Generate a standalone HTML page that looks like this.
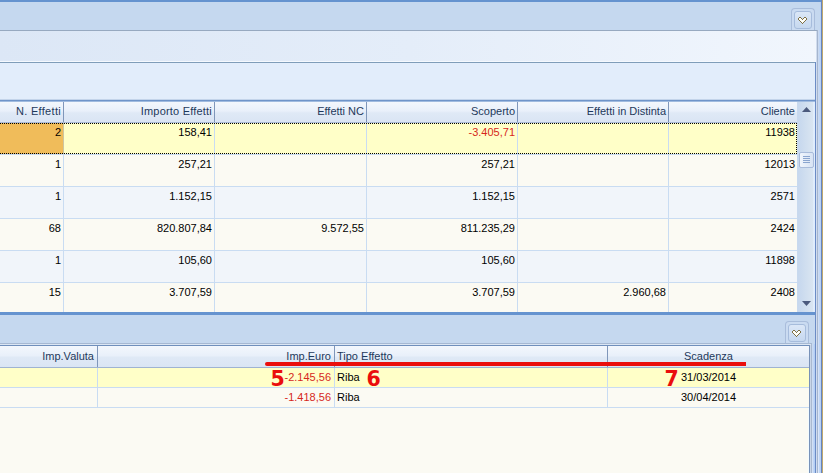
<!DOCTYPE html>
<html><head><meta charset="utf-8">
<style>
html,body{margin:0;padding:0;}
body{width:823px;height:473px;overflow:hidden;position:relative;background:#c5d8ef;font-family:"Liberation Sans",sans-serif;font-size:11px;color:#000;}
.abs{position:absolute;}
.hd{position:absolute;top:102px;height:20px;line-height:18px;text-align:right;color:#1e395b;box-sizing:border-box;border-right:1px solid #7f96ba;padding-right:2px;white-space:nowrap;}
.row{position:absolute;left:0;width:797px;height:31px;border-bottom:1px solid #c9dcf2;}
.c{position:absolute;top:0;height:31px;box-sizing:border-box;border-right:1px solid #c9dcf2;text-align:right;padding-right:2px;line-height:19px;white-space:nowrap;}
.red{color:#d6281c;}
.hd2{position:absolute;top:346px;height:21px;line-height:20px;color:#1e395b;box-sizing:border-box;border-right:1px solid #7f96ba;white-space:nowrap;}
.r2{position:absolute;left:0;width:809px;height:19px;border-bottom:1px solid #c9dcf2;}
.c2{position:absolute;top:0;height:19px;box-sizing:border-box;border-right:1px solid #c9dcf2;line-height:19px;white-space:nowrap;}
.num{position:absolute;color:#ea0e0d;font-weight:bold;font-size:20.5px;line-height:20px;font-family:"DejaVu Sans","Liberation Sans",sans-serif;}
.v{position:absolute;width:1px;}
</style></head><body>
<!-- top bands -->
<div class="abs" style="left:0;top:0;width:821px;height:2px;background:#6593cf;"></div>
<div class="abs" style="left:0;top:30px;width:817px;height:1px;background:#97a9c0;"></div>
<div class="abs" style="left:0;top:31px;width:817px;height:30px;background:linear-gradient(90deg,#dce7f6,#e4edf9 50%,#f1f6fd);"></div>
<div class="abs" style="left:0;top:61px;width:817px;height:1px;background:#f5f9fe;"></div>
<div class="abs" style="left:0;top:62px;width:816px;height:1px;background:#7f9db9;"></div>
<div class="abs" style="left:0;top:63px;width:815px;height:36px;background:#e2edfb;"></div>
<div class="abs" style="left:0;top:99px;width:815px;height:1px;background:#c3d4ea;"></div>
<div class="abs" style="left:0;top:100px;width:815px;height:1px;background:#6f94c9;"></div>
<div class="abs" style="left:0;top:101px;width:815px;height:1px;background:#a0bbdf;"></div>
<!-- top button -->
<div class="abs" style="left:791px;top:8px;width:24px;height:22px;box-sizing:border-box;border:1px solid #a9bddb;border-bottom:none;border-radius:4px 4px 0 0;background:#cadbf1;"></div>
<div class="abs" style="left:794px;top:11px;width:18px;height:18px;box-sizing:border-box;border:1px solid #a6bcdc;border-radius:3px;background:linear-gradient(#dbe7f7,#c6d8ef);"></div>
<svg class="abs" style="left:798px;top:17px" width="9" height="7" shape-rendering="crispEdges"><rect x="1" y="0" width="2" height="1" fill="#7f7044"/><rect x="6" y="0" width="2" height="1" fill="#7f7044"/><rect x="0" y="1" width="1" height="1" fill="#7f7044"/><rect x="1" y="1" width="2" height="1" fill="#fffffa"/><rect x="3" y="1" width="1" height="1" fill="#7f7044"/><rect x="5" y="1" width="1" height="1" fill="#7f7044"/><rect x="6" y="1" width="2" height="1" fill="#fffffa"/><rect x="8" y="1" width="1" height="1" fill="#7f7044"/><rect x="0" y="2" width="1" height="1" fill="#7f7044"/><rect x="1" y="2" width="3" height="1" fill="#fffffa"/><rect x="4" y="2" width="1" height="1" fill="#7f7044"/><rect x="5" y="2" width="3" height="1" fill="#fffffa"/><rect x="8" y="2" width="1" height="1" fill="#7f7044"/><rect x="1" y="3" width="1" height="1" fill="#7f7044"/><rect x="2" y="3" width="5" height="1" fill="#fffffa"/><rect x="7" y="3" width="1" height="1" fill="#7f7044"/><rect x="2" y="4" width="1" height="1" fill="#7f7044"/><rect x="3" y="4" width="3" height="1" fill="#fffffa"/><rect x="6" y="4" width="1" height="1" fill="#7f7044"/><rect x="3" y="5" width="1" height="1" fill="#7f7044"/><rect x="4" y="5" width="1" height="1" fill="#fffffa"/><rect x="5" y="5" width="1" height="1" fill="#7f7044"/><rect x="4" y="6" width="1" height="1" fill="#7f7044"/></svg>
<!-- upper grid -->
<div class="abs" style="left:0;top:102px;width:797px;height:20px;background:linear-gradient(#f3f7fd,#e9f0fa 45%,#dfe9f6 55%,#dae5f4);"></div>
<div class="abs" style="left:0;top:122px;width:797px;height:1px;background:#a8b9d6;"></div>
<div class="hd" style="left:0px;width:64px; letter-spacing:0.3px;">N. Effetti</div>
<div class="hd" style="left:64px;width:151px; letter-spacing:0.2px;">Importo Effetti</div>
<div class="hd" style="left:215px;width:152px;">Effetti NC</div>
<div class="hd" style="left:367px;width:151px;">Scoperto</div>
<div class="hd" style="left:518px;width:151px;">Effetti in Distinta</div>
<div class="hd" style="left:669px;width:129px;border-right-color:#b8c6dc;">Cliente</div>
<div class="row" style="top:123px;background:#ffffc8;"><div class="c" style="left:0px;width:64px;background:#f0bc5a;border-right-color:#cdc5a2;">2</div><div class="c" style="left:64px;width:151px;">158,41</div><div class="c" style="left:215px;width:152px;"></div><div class="c red" style="left:367px;width:151px;">-3.405,71</div><div class="c" style="left:518px;width:151px;"></div><div class="c" style="left:669px;width:128px;border-right:none;padding-right:2px;">11938</div></div>
<div class="row" style="top:155px;background:#fbfaf3;"><div class="c" style="left:0px;width:64px;">1</div><div class="c" style="left:64px;width:151px;">257,21</div><div class="c" style="left:215px;width:152px;"></div><div class="c" style="left:367px;width:151px;">257,21</div><div class="c" style="left:518px;width:151px;"></div><div class="c" style="left:669px;width:128px;border-right:none;padding-right:2px;">12013</div></div>
<div class="row" style="top:187px;background:#f1f5fa;"><div class="c" style="left:0px;width:64px;">1</div><div class="c" style="left:64px;width:151px;">1.152,15</div><div class="c" style="left:215px;width:152px;"></div><div class="c" style="left:367px;width:151px;">1.152,15</div><div class="c" style="left:518px;width:151px;"></div><div class="c" style="left:669px;width:128px;border-right:none;padding-right:2px;">2571</div></div>
<div class="row" style="top:219px;background:#fbfaf3;"><div class="c" style="left:0px;width:64px;">68</div><div class="c" style="left:64px;width:151px;">820.807,84</div><div class="c" style="left:215px;width:152px;">9.572,55</div><div class="c" style="left:367px;width:151px;">811.235,29</div><div class="c" style="left:518px;width:151px;"></div><div class="c" style="left:669px;width:128px;border-right:none;padding-right:2px;">2424</div></div>
<div class="row" style="top:251px;background:#f1f5fa;"><div class="c" style="left:0px;width:64px;">1</div><div class="c" style="left:64px;width:151px;">105,60</div><div class="c" style="left:215px;width:152px;"></div><div class="c" style="left:367px;width:151px;">105,60</div><div class="c" style="left:518px;width:151px;"></div><div class="c" style="left:669px;width:128px;border-right:none;padding-right:2px;">11898</div></div>
<div class="row" style="top:283px;background:#fbfaf3;border-bottom:none;height:29px;"><div class="c" style="left:0px;width:64px;">15</div><div class="c" style="left:64px;width:151px;">3.707,59</div><div class="c" style="left:215px;width:152px;"></div><div class="c" style="left:367px;width:151px;">3.707,59</div><div class="c" style="left:518px;width:151px;">2.960,68</div><div class="c" style="left:669px;width:128px;border-right:none;padding-right:2px;">2408</div></div>
<!-- focus dotted -->
<div class="abs" style="left:-1px;top:123px;width:798px;height:31px;box-sizing:border-box;border:1px dotted #000;"></div>
<!-- scrollbar -->
<div class="abs" style="left:797px;top:102px;width:18px;height:210px;background:linear-gradient(90deg,#c8d9ee,#c7d8ee 10%,#d9e5f1 88%,#dfecfc 89%);"></div>
<svg class="abs" style="left:802px;top:107px" width="9" height="5"><path d="M0 5 L4.5 0 L9 5Z" fill="#4b5a7d"/></svg>
<svg class="abs" style="left:802px;top:301px" width="9" height="5"><path d="M0 0 L4.5 5 L9 0Z" fill="#4b5a7d"/></svg>
<div class="abs" style="left:799px;top:152px;width:15px;height:16px;box-sizing:border-box;border:1px solid #a9bcdb;border-radius:2px;background:linear-gradient(90deg,#f0f5fc,#d7e3f4);"></div>
<div class="abs" style="left:803px;top:156px;width:7px;height:1px;background:#8aa5cf;box-shadow:0 2px 0 #8aa5cf,0 4px 0 #8aa5cf,0 6px 0 #8aa5cf;"></div>
<!-- splitter -->
<div class="abs" style="left:0;top:312px;width:815px;height:3px;background:#6593cf;"></div>
<!-- right borders -->
<div class="v" style="left:815px;top:62px;height:411px;background:#6b8cc6;"></div>
<div class="v" style="left:816px;top:31px;height:442px;background:#d0dcee;"></div>
<div class="v" style="left:817px;top:30px;height:443px;background:#a5b5ce;"></div>
<div class="v" style="left:818px;top:30px;height:443px;background:linear-gradient(#c9d9ef,#cbdaf0 50%,#dde9fb);"></div>
<div class="v" style="left:819px;top:30px;height:443px;background:#c0d6f6;"></div>
<div class="v" style="left:820px;top:2px;height:471px;background:#bad2f4;"></div>
<div class="v" style="left:821px;top:0;height:473px;background:#6585c0;"></div>
<div class="v" style="left:822px;top:0;height:473px;background:#bfa970;"></div>
<!-- lower button -->
<div class="abs" style="left:785px;top:321px;width:24px;height:23px;box-sizing:border-box;border:1px solid #a9bddb;border-bottom:none;border-radius:4px 4px 0 0;background:#cadbf1;"></div>
<div class="abs" style="left:788px;top:324px;width:18px;height:18px;box-sizing:border-box;border:1px solid #a6bcdc;border-radius:3px;background:linear-gradient(#dbe7f7,#c6d8ef);"></div>
<svg class="abs" style="left:792px;top:330px" width="9" height="7" shape-rendering="crispEdges"><rect x="1" y="0" width="2" height="1" fill="#7f7044"/><rect x="6" y="0" width="2" height="1" fill="#7f7044"/><rect x="0" y="1" width="1" height="1" fill="#7f7044"/><rect x="1" y="1" width="2" height="1" fill="#fffffa"/><rect x="3" y="1" width="1" height="1" fill="#7f7044"/><rect x="5" y="1" width="1" height="1" fill="#7f7044"/><rect x="6" y="1" width="2" height="1" fill="#fffffa"/><rect x="8" y="1" width="1" height="1" fill="#7f7044"/><rect x="0" y="2" width="1" height="1" fill="#7f7044"/><rect x="1" y="2" width="3" height="1" fill="#fffffa"/><rect x="4" y="2" width="1" height="1" fill="#7f7044"/><rect x="5" y="2" width="3" height="1" fill="#fffffa"/><rect x="8" y="2" width="1" height="1" fill="#7f7044"/><rect x="1" y="3" width="1" height="1" fill="#7f7044"/><rect x="2" y="3" width="5" height="1" fill="#fffffa"/><rect x="7" y="3" width="1" height="1" fill="#7f7044"/><rect x="2" y="4" width="1" height="1" fill="#7f7044"/><rect x="3" y="4" width="3" height="1" fill="#fffffa"/><rect x="6" y="4" width="1" height="1" fill="#7f7044"/><rect x="3" y="5" width="1" height="1" fill="#7f7044"/><rect x="4" y="5" width="1" height="1" fill="#fffffa"/><rect x="5" y="5" width="1" height="1" fill="#7f7044"/><rect x="4" y="6" width="1" height="1" fill="#7f7044"/></svg>
<!-- lower grid -->
<div class="abs" style="left:0;top:343px;width:812px;height:1px;background:#a5b8d3;"></div>
<div class="abs" style="left:0;top:344px;width:811px;height:1px;background:#dbe6f4;"></div>
<div class="abs" style="left:0;top:345px;width:810px;height:1px;background:#6f8fbc;"></div>
<div class="abs" style="left:0;top:346px;width:809px;height:127px;background:#fbfaf3;"></div>
<div class="abs" style="left:0;top:346px;width:809px;height:21px;background:linear-gradient(#f3f7fd,#e9f0fa 45%,#dfe9f6 55%,#dae5f4);"></div>
<div class="abs" style="left:0;top:367px;width:809px;height:1px;background:#9fb3d2;"></div>
<div class="v" style="left:808px;top:408px;height:65px;background:#f2fbff;"></div>
<div class="v" style="left:809px;top:345px;height:128px;background:#7892b8;"></div>
<div class="v" style="left:810px;top:345px;height:128px;background:#c9d6e8;"></div>
<div class="v" style="left:811px;top:344px;height:129px;background:#a9b9d1;"></div>
<div class="v" style="left:812px;top:344px;height:129px;background:linear-gradient(#c8daf1,#d5e2f5);"></div>
<div class="v" style="left:813px;top:344px;height:129px;background:#c0d6f6;"></div>
<div class="v" style="left:814px;top:344px;height:129px;background:#b5cef3;"></div>
<div class="hd2" style="left:0;width:98px;text-align:right;padding-right:3px;">Imp.Valuta</div>
<div class="hd2" style="left:98px;width:237px;text-align:right;padding-right:3px;">Imp.Euro</div>
<div class="hd2" style="left:335px;width:273px;text-align:left;padding-left:2px;">Tipo Effetto</div>
<div class="hd2" style="left:608px;width:201px;text-align:center;border-right:none">Scadenza</div>
<div class="r2" style="top:368px;background:#ffffc8;"><div class="c2" style="left:0;width:98px"></div><div class="c2 red" style="left:98px;width:237px;text-align:right;padding-right:3px">-2.145,56</div><div class="c2" style="left:335px;width:273px;padding-left:2px">Riba</div><div class="c2" style="left:608px;width:201px;text-align:center;border-right:none">31/03/2014</div></div>
<div class="r2" style="top:388px;background:#fbfaf3;"><div class="c2" style="left:0;width:98px"></div><div class="c2 red" style="left:98px;width:237px;text-align:right;padding-right:3px">-1.418,56</div><div class="c2" style="left:335px;width:273px;padding-left:2px">Riba</div><div class="c2" style="left:608px;width:201px;text-align:center;border-right:none">30/04/2014</div></div>
<!-- annotations -->
<div class="abs" style="left:265px;top:362px;width:481px;height:4px;background:#ea0e0d;border-radius:2px 0 0 2px;"></div>
<div class="num" style="left:270.5px;top:369px;">5</div>
<div class="num" style="left:366.5px;top:369px;">6</div>
<div class="num" style="left:664.5px;top:369px;">7</div>
</body></html>
